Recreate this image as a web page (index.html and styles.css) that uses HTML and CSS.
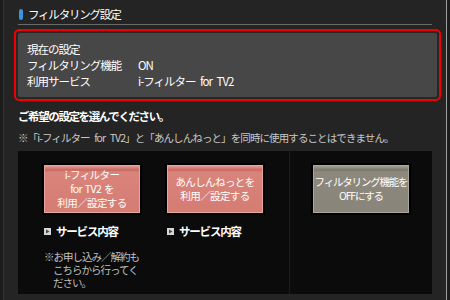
FILE: index.html
```html
<!DOCTYPE html>
<html lang="ja">
<head>
    <meta charset="UTF-8">
    <meta name="viewport" content="width=device-width, initial-scale=1.0">
    <title>フィルタリング設定</title>
    <link rel="stylesheet" href="styles.css">
</head>
<body>
    <div class="screen">
        <h1 class="title"><span class="title-bar"></span>フィルタリング設定</h1>

        <div class="current">
            <div class="current-body">
                <div class="row">現在の設定</div>
                <div class="row"><span class="label">フィルタリング機能</span><span>ON</span></div>
                <div class="row"><span class="label">利用サービス</span><span>i-フィルター for TV2</span></div>
            </div>
        </div>

        <p class="lead">ご希望の設定を選んでください。</p>
        <p class="note">※「i-フィルター for TV2」と「あんしんねっと」を同時に使用することはできません。</p>

        <div class="panel">
            <div class="services">
                <div class="option">
                    <button class="btn btn-red">i-フィルター<br>for TV2 を<br>利用／設定する</button>
                    <a class="link" href="#">
                        <svg width="7" height="7" viewBox="0 0 7 7"><rect width="7" height="7" fill="#d6d6d6"/><polygon points="2,1.5 5.5,3.5 2,5.5" fill="#4a4a4a"/></svg>
                        サービス内容
                    </a>
                    <p class="small">※お申し込み／解約もこちらから行ってください。</p>
                </div>
                <div class="option">
                    <button class="btn btn-red">あんしんねっとを<br>利用／設定する</button>
                    <a class="link" href="#">
                        <svg width="7" height="7" viewBox="0 0 7 7"><rect width="7" height="7" fill="#d6d6d6"/><polygon points="2,1.5 5.5,3.5 2,5.5" fill="#4a4a4a"/></svg>
                        サービス内容
                    </a>
                </div>
            </div>
            <div class="off">
                <button class="btn btn-gray">フィルタリング機能を<br>OFFにする</button>
            </div>
        </div>
    </div>
</body>
</html>
```

FILE: styles.css
```css
body {
    margin: 0;
    background-color: #1c1c1c;
    font-family: "Noto Sans CJK JP", "Noto Sans", sans-serif;
    color: #fff;
    word-spacing: 3px;
}
.screen {
    margin-left: 3px;
    width: 428px;
    height: 300px;
    padding: 0 0 0 14px;
    background-color: #242424;
    border-left: 1px solid #333;
    border-right: 1px solid #a0a0a0;
    overflow: hidden;
}
.title {
    display: flex;
    align-items: center;
    gap: 5px;
    width: 414px;
    margin: 0;
    padding: 7px 0 3px;
    font-size: 11.5px;
    font-weight: normal;
    line-height: 14px;
    letter-spacing: -1.2px;
    border-bottom: 1px solid #6a6a6a;
}
.title-bar {
    width: 4px;
    height: 11px;
    margin-left: 1px;
    border-radius: 2px;
    background-color: #3c92e0;
}
.current {
    margin: 4px 0 0 -4px;
    width: 419px;
    padding: 2px;
    border: 2px solid #f00000;
    border-radius: 5px;
    background-color: #262626;
}
.current-body {
    padding: 8px 9px 8px;
    background-color: #474747;
    border-radius: 2px;
    font-size: 11.5px;
    line-height: 16px;
    letter-spacing: -1px;
}
.row {
    display: flex;
}
.label {
    width: 111px;
}
.lead {
    margin: 8px 0 0;
    font-size: 11.5px;
    font-weight: bold;
    line-height: 14px;
    letter-spacing: -1.4px;
}
.note {
    margin: 8px 0 0;
    font-size: 10.5px;
    line-height: 14px;
    letter-spacing: -0.9px;
    color: #c8c8c8;
    white-space: nowrap;
}
.panel {
    display: grid;
    grid-template-columns: 272px 1fr;
    width: 414px;
    height: 143px;
    margin-top: 6px;
    background-color: #0b0b0b;
}
.services {
    display: flex;
    gap: 27px;
    padding: 14px 0 0 26px;
    border-right: 1px solid #1d1d1d;
}
.option {
    width: 96px;
}
.off {
    display: flex;
    justify-content: center;
    padding-top: 14px;
}
.btn {
    display: flex;
    align-items: center;
    justify-content: center;
    width: 96px;
    height: 48px;
    padding: 0;
    font-family: inherit;
    font-size: 10.5px;
    line-height: 14px;
    letter-spacing: -0.6px;
    word-spacing: 1px;
    color: #fff;
    text-align: center;
    cursor: pointer;
    box-shadow: 0 0 0 2px #000;
}
.btn-red {
    border: 1px solid #e8a59d;
    background: linear-gradient(#e39a91 0, #c9685f 4px, #d9847b 6px, #d57c73 100%);
}
.btn-gray {
    border: 1px solid #aaa699;
    background: linear-gradient(#a29e92 0, #7b776c 4px, #8c887c 6px, #89857a 100%);
    letter-spacing: -1.2px;
}
.link {
    display: flex;
    align-items: center;
    gap: 5px;
    margin-top: 11px;
    font-size: 11.5px;
    font-weight: bold;
    line-height: 14px;
    letter-spacing: -1.2px;
    color: #fff;
    text-decoration: none;
}
.small {
    margin: 12px 0 0;
    padding-left: 9px;
    text-indent: -9px;
    font-size: 10.5px;
    line-height: 13px;
    letter-spacing: -1px;
    color: #c0c0c0;
}
```
